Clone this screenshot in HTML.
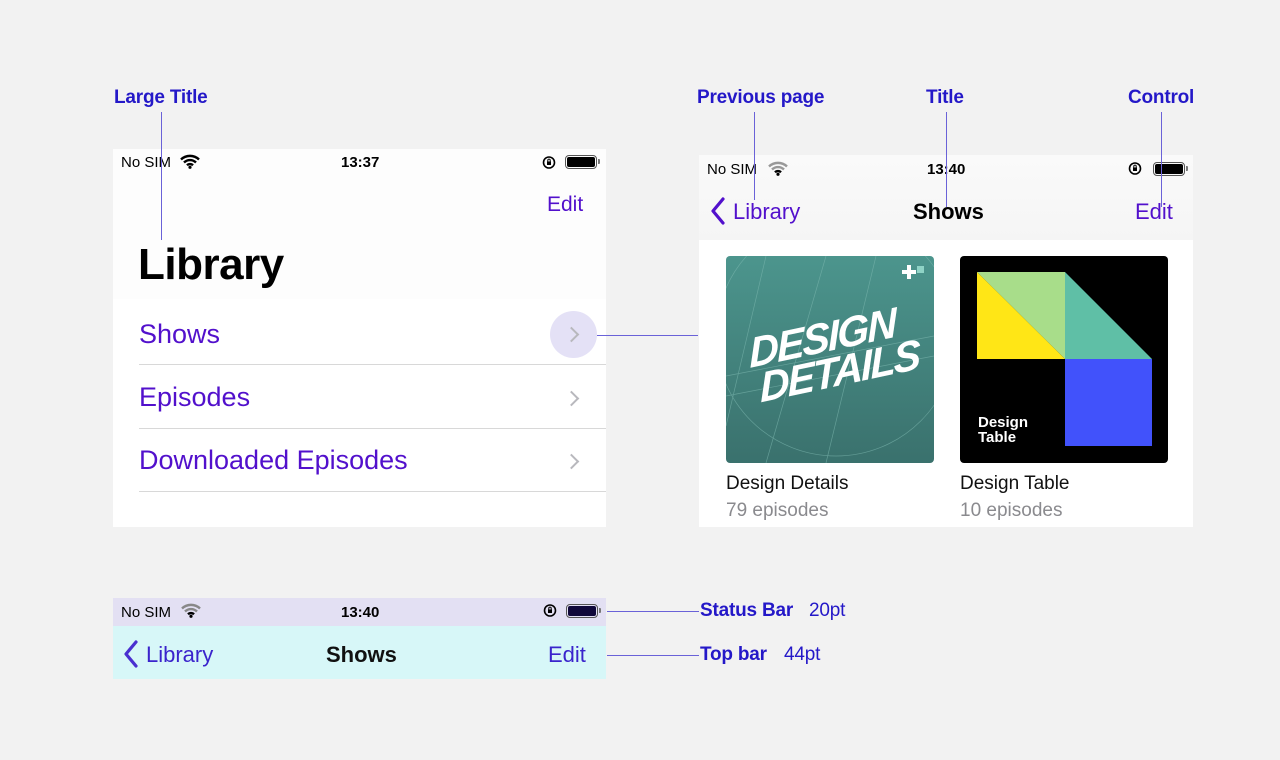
<!DOCTYPE html>
<html><head><meta charset="utf-8"><style>
*{margin:0;padding:0;box-sizing:border-box}
body{width:1280px;height:760px;background:#f2f2f2;position:relative;overflow:hidden;font-family:"Liberation Sans",sans-serif}
.a{position:absolute;white-space:nowrap}
.lbl{color:#2418c8;font-size:19px;font-weight:bold;letter-spacing:-0.2px}
.vl{position:absolute;width:1px;background:#6a62d8}
.hl{position:absolute;height:1px;background:#6a62d8}
.pur{color:#5210cc}
.sb{font-size:15px;color:#000}
.sep{position:absolute;left:139px;width:467px;height:1px;background:#d8d8d8}
.chev{position:absolute;width:11px;height:11px;border-right:2px solid #b8b8bd;border-top:2px solid #b8b8bd;transform:rotate(45deg)}
.bat{position:absolute;width:32px;height:14px;border:1.5px solid #555;border-radius:4px;padding:1px}
.bat i{display:block;width:100%;height:100%;background:#000;border-radius:2px}
.bat:after{content:"";position:absolute;right:-4px;top:3px;width:2px;height:5px;background:#777;border-radius:0 1px 1px 0}
</style></head><body>

<div class="a lbl" style="left:114px;top:87px">Large Title</div>
<div class="a lbl" style="left:697px;top:87px">Previous page</div>
<div class="a lbl" style="left:926px;top:87px">Title</div>
<div class="a lbl" style="left:1128px;top:87px">Control</div>

<div class="a" style="left:113px;top:149px;width:493px;height:378px;background:#fff"></div>
<div class="a" style="left:113px;top:149px;width:493px;height:150px;background:#fdfdfd"></div>
<div class="a sb" style="left:121px;top:154px">No SIM</div>
<svg class="a" style="left:180px;top:154px" width="20" height="15" viewBox="0 0 20 15"><path d="M1 5.5A13 13 0 0 1 19 5.5M4 8.5A8.5 8.5 0 0 1 16 8.5M7 11.3A4.3 4.3 0 0 1 13 11.3" stroke="#000" stroke-width="2.4" fill="none"/><circle cx="10" cy="13.3" r="1.6"/></svg>
<div class="a sb" style="left:341px;top:154px;font-weight:bold">13:37</div>
<svg class="a" style="left:542px;top:155px" width="15" height="15" viewBox="0 0 15 15"><circle cx="7" cy="7.5" r="5.5" fill="none" stroke="#000" stroke-width="1.6"/><rect x="5" y="6.5" width="4" height="3.5" fill="#000"/><path d="M5.8 6.5V5.3a1.2 1.2 0 0 1 2.4 0V6.5" stroke="#000" fill="none"/></svg>
<div class="bat" style="left:565px;top:155px"><i></i></div>
<div class="a pur" style="left:547px;top:193px;font-size:21px">Edit</div>
<div class="a" style="left:138px;top:240px;font-size:44px;font-weight:bold;color:#000;letter-spacing:-0.5px">Library</div>
<div class="vl" style="left:161px;top:112px;height:128px"></div>

<div class="a pur" style="left:139px;top:319px;font-size:27px">Shows</div>
<div class="a" style="left:550px;top:311px;width:47px;height:47px;border-radius:50%;background:#e4e1f6"></div>
<div class="chev" style="left:566px;top:329px"></div>
<div class="hl" style="left:597px;top:335px;width:101px"></div>
<div class="sep" style="top:364px"></div>
<div class="a pur" style="left:139px;top:382px;font-size:27px">Episodes</div>
<div class="chev" style="left:566px;top:393px"></div>
<div class="sep" style="top:428px"></div>
<div class="a pur" style="left:139px;top:445px;font-size:27px">Downloaded Episodes</div>
<div class="chev" style="left:566px;top:456px"></div>
<div class="sep" style="top:491px"></div>

<div class="a" style="left:699px;top:155px;width:494px;height:372px;background:#fff"></div>
<div class="a" style="left:699px;top:155px;width:494px;height:85px;background:linear-gradient(#fafafa,#f5f5f5)"></div>
<div class="a sb" style="left:707px;top:161px">No SIM</div>
<svg class="a" style="left:768px;top:161px" width="20" height="15" viewBox="0 0 20 15"><path d="M1 5.5A13 13 0 0 1 19 5.5M4 8.5A8.5 8.5 0 0 1 16 8.5" stroke="#999" stroke-width="2.4" fill="none"/><path d="M7 11.3A4.3 4.3 0 0 1 13 11.3" stroke="#000" stroke-width="2.4" fill="none"/><circle cx="10" cy="13.3" r="1.6"/></svg>
<div class="a sb" style="left:927px;top:161px;font-weight:bold">13:40</div>
<svg class="a" style="left:1128px;top:161px" width="15" height="15" viewBox="0 0 15 15"><circle cx="7" cy="7.5" r="5.5" fill="none" stroke="#000" stroke-width="1.6"/><rect x="5" y="6.5" width="4" height="3.5" fill="#000"/><path d="M5.8 6.5V5.3a1.2 1.2 0 0 1 2.4 0V6.5" stroke="#000" fill="none"/></svg>
<div class="bat" style="left:1153px;top:162px"><i></i></div>
<svg class="a" style="left:710px;top:197px" width="16" height="28" viewBox="0 0 16 28"><path d="M13 2L3 14L13 26" stroke="#5210cc" stroke-width="3.2" fill="none" stroke-linecap="round" stroke-linejoin="round"/></svg>
<div class="a pur" style="left:733px;top:199px;font-size:22px">Library</div>
<div class="a" style="left:913px;top:199px;font-size:22px;font-weight:bold;color:#000">Shows</div>
<div class="a pur" style="left:1135px;top:199px;font-size:22px">Edit</div>
<div class="vl" style="left:754px;top:112px;height:88px"></div>
<div class="vl" style="left:946px;top:112px;height:95px"></div>
<div class="vl" style="left:1161px;top:112px;height:95px"></div>

<div class="a" style="left:726px;top:256px;width:208px;height:207px;border-radius:4px;background:linear-gradient(180deg,#4c958d,#3a716d);overflow:hidden">
<svg width="208" height="207" style="position:absolute;left:0;top:0"><g stroke="#7fb9b1" stroke-width="0.7" fill="none" opacity="0.6"><path d="M40 0L0 170M100 0L40 207M150 0L100 207M0 120L208 80M0 140L208 100"/><circle cx="110" cy="80" r="120"/></g><rect x="191" y="10" width="7" height="7" fill="#8fd3c6"/><path d="M190 14h-5v-5h-4v5h-5v4h5v5h4v-5h5z" fill="#fff"/></svg>
<div class="a" style="left:22px;top:62px;color:#fff;font-size:42px;font-weight:bold;font-style:italic;transform:rotate(-12deg) skewX(-10deg);line-height:36px;letter-spacing:-2px">DESIGN<br>&nbsp;DETAILS</div>
</div>
<div class="a" style="left:960px;top:256px;width:208px;height:207px;border-radius:4px;background:#000;overflow:hidden">
<svg width="208" height="207" style="position:absolute;left:0;top:0"><polygon points="17,16 105,16 105,103" fill="#a8dd8a"/><polygon points="17,16 105,103 17,103" fill="#ffe616"/><polygon points="105,16 192,103 105,103" fill="#5fbfa6"/><rect x="105" y="103" width="87" height="87" fill="#4152fb"/></svg>
<div class="a" style="left:18px;top:159px;color:#fff;font-size:15px;line-height:15px;font-weight:bold">Design<br>Table</div>
</div>
<div class="a" style="left:726px;top:473px;font-size:19px;color:#111">Design Details</div>
<div class="a" style="left:726px;top:500px;font-size:19px;color:#8a8a8e">79 episodes</div>
<div class="a" style="left:960px;top:473px;font-size:19px;color:#111">Design Table</div>
<div class="a" style="left:960px;top:500px;font-size:19px;color:#8a8a8e">10 episodes</div>

<div class="a" style="left:113px;top:598px;width:493px;height:28px;background:#e3e0f3"></div>
<div class="a" style="left:113px;top:626px;width:493px;height:53px;background:#d7f7f8"></div>
<div class="a sb" style="left:121px;top:604px">No SIM</div>
<svg class="a" style="left:181px;top:603px" width="20" height="15" viewBox="0 0 20 15"><path d="M1 5.5A13 13 0 0 1 19 5.5M4 8.5A8.5 8.5 0 0 1 16 8.5" stroke="#888" stroke-width="2.4" fill="none"/><path d="M7 11.3A4.3 4.3 0 0 1 13 11.3" stroke="#000" stroke-width="2.4" fill="none"/><circle cx="10" cy="13.3" r="1.6"/></svg>
<div class="a sb" style="left:341px;top:604px;font-weight:bold">13:40</div>
<svg class="a" style="left:543px;top:603px" width="15" height="15" viewBox="0 0 15 15"><circle cx="7" cy="7.5" r="5.5" fill="none" stroke="#000" stroke-width="1.6"/><rect x="5" y="6.5" width="4" height="3.5" fill="#000"/><path d="M5.8 6.5V5.3a1.2 1.2 0 0 1 2.4 0V6.5" stroke="#000" fill="none"/></svg>
<div class="bat" style="left:566px;top:604px"><i style="background:#10083a"></i></div>
<svg class="a" style="left:123px;top:640px" width="16" height="28" viewBox="0 0 16 28"><path d="M13 2L3 14L13 26" stroke="#4a30d0" stroke-width="3.2" fill="none" stroke-linecap="round" stroke-linejoin="round"/></svg>
<div class="a" style="left:146px;top:642px;font-size:22px;color:#3a24cc">Library</div>
<div class="a" style="left:326px;top:642px;font-size:22px;font-weight:bold;color:#111">Shows</div>
<div class="a" style="left:548px;top:642px;font-size:22px;color:#3a24cc">Edit</div>
<div class="hl" style="left:607px;top:611px;width:92px"></div>
<div class="hl" style="left:607px;top:655px;width:92px"></div>
<div class="a lbl" style="left:700px;top:600px">Status Bar</div>
<div class="a lbl" style="left:809px;top:600px;font-weight:normal">20pt</div>
<div class="a lbl" style="left:700px;top:644px">Top bar</div>
<div class="a lbl" style="left:784px;top:644px;font-weight:normal">44pt</div>
</body></html>
